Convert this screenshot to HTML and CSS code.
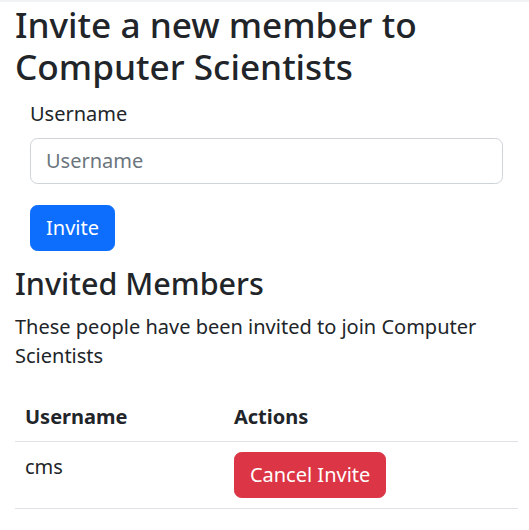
FILE: index.html
```html
<!DOCTYPE html>
<html lang="en">
<head>
<meta charset="utf-8">
<title>Invite a new member</title>
<link rel="stylesheet" href="styles.css">
</head>
<body>
<div class="topbar"></div>
<main class="container">
  <h1 class="title">Invite a new member to Computer Scientists</h1>
  <form class="invite-form">
    <label class="form-label" for="username">Username</label>
    <input class="form-control" id="username" type="text" placeholder="Username">
    <button class="btn btn-primary" type="button">Invite</button>
  </form>
  <h2 class="subtitle">Invited Members</h2>
  <p class="lead-text">These people have been invited to join Computer Scientists</p>
  <table class="table">
    <thead>
      <tr><th>Username</th><th>Actions</th></tr>
    </thead>
    <tbody>
      <tr><td>cms</td><td><button class="btn btn-danger" type="button">Cancel Invite</button></td></tr>
    </tbody>
  </table>
</main>
</body>
</html>
```
FILE: styles.css
```css
* { box-sizing: border-box; }
html, body { margin: 0; padding: 0; background: #fff; }
body {
  font-family: "Noto Sans", "Open Sans", sans-serif;
  font-size: 20px;
  line-height: 29px;
  color: #212529;
}
.topbar { height: 2px; background: #f1f2f3; }
.container { padding: 0 11px 0 15px; }
.title {
  font-size: 35.2px;
  font-weight: 500;
  line-height: 42px;
  margin: 1px 0 11.5px;
}
.invite-form {
  padding: 0 15px;
  margin-bottom: 14px;
  display: flex;
  flex-direction: column;
  align-items: flex-start;
}
.form-label { display: block; margin-bottom: 10px; }
.form-control {
  width: 100%;
  font: inherit;
  color: #212529;
  padding: 7.5px 15px;
  height: 46px;
  border: 1px solid #ced4da;
  border-radius: 7.5px;
  margin-bottom: 21px;
}
.form-control::placeholder { color: #6c757d; opacity: 1; }
.btn {
  font: inherit;
  padding: 7.5px 15px;
  border: 1px solid transparent;
  border-radius: 7.5px;
  color: #fff;
  height: 46px;
}
.btn-primary { background: #0d6efd; border-color: #0d6efd; }
.btn-danger { background: #dc3545; border-color: #dc3545; }
.subtitle {
  font-size: 30.5px;
  font-weight: 500;
  line-height: 36.6px;
  margin: 0 0 11px;
}
.lead-text { margin: 0 0 21.5px; }
.table { width: 100%; border-collapse: collapse; }
.table th, .table td {
  text-align: left;
  vertical-align: top;
  padding: 10px;
  border-bottom: 1px solid #dee2e6;
}
.table td { padding-bottom: 10.5px; }
.table th { font-weight: 700; vertical-align: bottom; }
```
